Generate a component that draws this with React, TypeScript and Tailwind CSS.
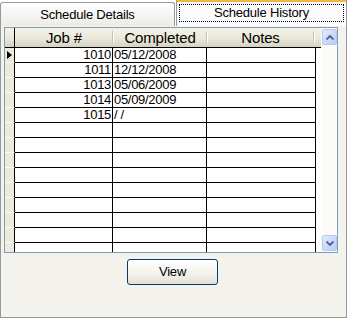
import React from "react";

const rows = [
  { job: "1010", date: "05/12/2008" },
  { job: "1011", date: "12/12/2008" },
  { job: "1013", date: "05/06/2009" },
  { job: "1014", date: "05/09/2009" },
  { job: "1015", date: "/ /" },
  { job: "", date: "" },
  { job: "", date: "" },
  { job: "", date: "" },
  { job: "", date: "" },
  { job: "", date: "" },
  { job: "", date: "" },
  { job: "", date: "" },
  { job: "", date: "" },
];

function Row({ job, date, first, h }: { job: string; date: string; first?: boolean; h: string }) {
  return (
    <div className={`flex ${h}`}>
      <div className="w-[10px] shrink-0 bg-[#ebeadb] border-r border-r-black border-b border-b-[#fbfbf7] flex items-center justify-center">
        {first && (
          <svg width="5" height="8" viewBox="0 0 5 8">
            <path d="M0 0 L5 4 L0 8 Z" fill="#000" />
          </svg>
        )}
      </div>
      <div className="w-[98px] shrink-0 border-r border-r-black border-b border-b-black bg-white text-right pr-[1px] leading-[14px] text-[13px] tracking-[-0.3px]">
        {job}
      </div>
      <div className="w-[94px] shrink-0 border-r border-r-black border-b border-b-black bg-white pl-[1px] leading-[14px] text-[13px] tracking-[-0.3px]">
        {date}
      </div>
      <div className="w-[109px] shrink-0 border-r border-r-black border-b border-b-black bg-white" />
      <div className="w-[5px] shrink-0 bg-white" />
    </div>
  );
}

function HeaderCell({ label, w }: { label: string; w: string }) {
  return (
    <div className={`${w} shrink-0 relative flex items-center justify-center text-[15px] tracking-[-0.15px]`}>
      <span className="mt-[1px]">{label}</span>
      <div className="absolute right-[0px] top-[3px] h-[12px] w-[1px] bg-[#c7c5b2]" />
      <div className="absolute right-[-1px] top-[3px] h-[12px] w-[1px] bg-white" />
    </div>
  );
}

export default function App() {
  return (
    <div
      className="w-[348px] h-[319px] bg-white text-black overflow-hidden"
      style={{ fontFamily: '"Liberation Sans", Arial, sans-serif' }}
    >
      {/* tabs */}
      <div className="flex h-[26px]">
        <div className="w-[175px] h-[24px] mt-[2px] border border-b-0 border-[#919b9c] rounded-t-[3px] bg-gradient-to-b from-white to-[#ecebe5] flex items-center justify-center text-[13px] tracking-[-0.2px] pt-[1px]">
          Schedule Details
        </div>
        <div className="ml-[1px] w-[171px] h-[26px] flex flex-col border-x border-[#919b9c] bg-[#fcfcfe]">
          <div className="h-[2px] bg-[#f5b443] shrink-0" />
          <div className="mx-[2px] mt-[2px] h-[18px] border border-dotted border-black flex items-center justify-center text-[13px] tracking-[-0.2px]">
            Schedule History
          </div>
        </div>
      </div>
      {/* panel */}
      <div className="w-[347px] h-[292px] border-x border-b border-[#919b9c] bg-[#f3f2ec] pl-[3px] pt-[1px]">
        <div className="w-[334px] h-[226px] border border-[#7f9db9] bg-white flex">
          <div className="w-[316px] flex flex-col overflow-hidden">
            {/* header */}
            <div className="flex h-[20px] shrink-0 border-b border-b-black bg-gradient-to-b from-[#f3f2ea] via-[#ebeadb] to-[#d6d2c2]">
              <div className="w-[10px] shrink-0 border-r border-r-black" />
              <HeaderCell label="Job #" w="w-[98px]" />
              <HeaderCell label="Completed" w="w-[94px]" />
              <HeaderCell label="Notes" w="w-[107px]" />
              <div className="w-[7px] shrink-0" />
            </div>
            {rows.map((r, i) => (
              <Row key={i} job={r.job} date={r.date} first={i === 0} h="h-[15px] shrink-0" />
            ))}
            <Row job="" date="" h="h-[15px] shrink-0" />
          </div>
          {/* scrollbar */}
          <div className="w-[16px] bg-[#fbfbf8] flex flex-col justify-between py-[1px] pl-[1px]">
            <div className="w-[15px] h-[16px] rounded-[2px] border border-[#b5c8f3] bg-gradient-to-br from-[#e1eafe] to-[#b9cdfa] flex items-center justify-center">
              <svg width="8" height="5" viewBox="0 0 8 5">
                <path d="M0.5 4.5 L4 1 L7.5 4.5" stroke="#4d6185" strokeWidth="1.8" fill="none" />
              </svg>
            </div>
            <div className="w-[15px] h-[16px] rounded-[2px] border border-[#b5c8f3] bg-gradient-to-br from-[#e1eafe] to-[#b9cdfa] flex items-center justify-center">
              <svg width="8" height="5" viewBox="0 0 8 5">
                <path d="M0.5 0.5 L4 4 L7.5 0.5" stroke="#4d6185" strokeWidth="1.8" fill="none" />
              </svg>
            </div>
          </div>
        </div>
        <div className="ml-[123px] mt-[6px] w-[91px] h-[26px] rounded-[3px] border border-[#003c74] bg-gradient-to-b from-white via-[#f5f4ef] to-[#e3e1d6] flex items-center justify-center text-[13px] tracking-[-0.2px]">
          View
        </div>
      </div>
    </div>
  );
}
